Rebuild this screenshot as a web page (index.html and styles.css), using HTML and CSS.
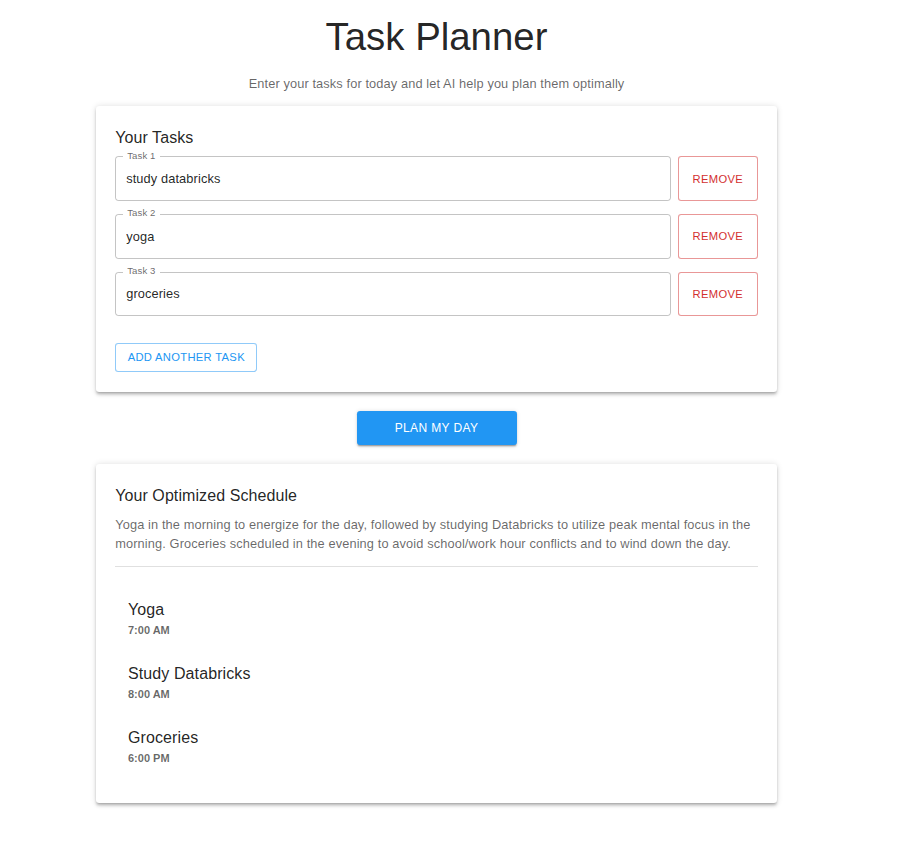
FILE: index.html
```html
<!DOCTYPE html>
<html lang="en">
<head>
<meta charset="utf-8">
<title>Task Planner</title>
<link rel="stylesheet" href="styles.css">
</head>
<body>
<main class="page">
  <h1 class="title">Task Planner</h1>
  <p class="subtitle">Enter your tasks for today and let AI help you plan them optimally</p>

  <section class="paper tasks-paper">
    <h2 class="paper-heading">Your Tasks</h2>
    <div class="task-list">
      <div class="task-row">
        <div class="field">
          <span class="field-label">Task 1</span>
          <input class="field-input" type="text" value="study databricks">
        </div>
        <button class="btn btn-remove" type="button">Remove</button>
      </div>
      <div class="task-row">
        <div class="field">
          <span class="field-label">Task 2</span>
          <input class="field-input" type="text" value="yoga">
        </div>
        <button class="btn btn-remove" type="button">Remove</button>
      </div>
      <div class="task-row">
        <div class="field">
          <span class="field-label">Task 3</span>
          <input class="field-input" type="text" value="groceries">
        </div>
        <button class="btn btn-remove" type="button">Remove</button>
      </div>
    </div>
    <button class="btn btn-add" type="button">Add Another Task</button>
  </section>

  <div class="plan-wrap">
    <button class="btn btn-plan" type="button">Plan My Day</button>
  </div>

  <section class="paper schedule-paper">
    <h2 class="paper-heading">Your Optimized Schedule</h2>
    <p class="summary">Yoga in the morning to energize for the day, followed by studying Databricks to utilize peak mental focus in the morning. Groceries scheduled in the evening to avoid school/work hour conflicts and to wind down the day.</p>
    <hr class="divider">
    <ul class="schedule">
      <li class="schedule-item">
        <span class="item-name">Yoga</span>
        <span class="item-time">7:00 AM</span>
      </li>
      <li class="schedule-item">
        <span class="item-name">Study Databricks</span>
        <span class="item-time">8:00 AM</span>
      </li>
      <li class="schedule-item">
        <span class="item-name">Groceries</span>
        <span class="item-time">6:00 PM</span>
      </li>
    </ul>
  </section>
</main>
</body>
</html>
```

FILE: styles.css
```css
* {
  box-sizing: border-box;
}

html, body {
  margin: 0;
  padding: 0;
  background: #ffffff;
}

body {
  font-family: "Liberation Sans", Arial, sans-serif;
  color: rgba(0, 0, 0, 0.87);
}

.page {
  width: 681px;
  margin-left: 96px;
  padding-top: 14.5px;
  padding-bottom: 40px;
}

.title {
  margin: 0 0 14.5px;
  font-size: 38.4px;
  line-height: 44.8px;
  font-weight: 400;
  text-align: center;
  color: rgba(0, 0, 0, 0.87);
}

.subtitle {
  margin: 0 0 13px;
  font-size: 12.8px;
  line-height: 19.2px;
  letter-spacing: 0.11px;
  text-align: center;
  color: rgba(0, 0, 0, 0.6);
}

.paper {
  background: #fff;
  border-radius: 3.2px;
  box-shadow: 0 2.4px 2.4px -1.6px rgba(0, 0, 0, 0.2),
              0 2.4px 3.2px 0 rgba(0, 0, 0, 0.14),
              0 0.8px 6.4px 0 rgba(0, 0, 0, 0.12);
  padding: 19.2px;
}

.tasks-paper {
  padding-bottom: 20px;
}

.schedule-paper {
  margin-top: 0.8px;
}

.paper-heading {
  margin: 0 0 5.6px;
  font-size: 16px;
  line-height: 25.6px;
  font-weight: 400;
  letter-spacing: 0.08px;
  color: rgba(0, 0, 0, 0.87);
}

.task-list {
  display: flex;
  flex-direction: column;
  gap: 12.8px;
}

.task-row {
  display: flex;
  gap: 6.4px;
  height: 44.8px;
}

.field {
  position: relative;
  flex: 1;
  display: flex;
  align-items: center;
  border: 1px solid rgba(0, 0, 0, 0.23);
  border-radius: 3.2px;
}

.field-label {
  position: absolute;
  left: 7px;
  top: -6.5px;
  padding: 0 4px;
  background: #fff;
  font-size: 9.6px;
  line-height: 9.6px;
  letter-spacing: 0.1px;
  color: rgba(0, 0, 0, 0.6);
}

.field-input {
  width: 100%;
  border: 0;
  outline: none;
  background: transparent;
  padding: 0 10px;
  margin: 0;
  font-family: inherit;
  font-size: 12.8px;
  letter-spacing: 0.11px;
  color: rgba(0, 0, 0, 0.87);
}

.btn {
  font-family: inherit;
  text-transform: uppercase;
  font-weight: 500;
  letter-spacing: 0.32px;
  border-radius: 3.2px;
  cursor: pointer;
  margin: 0;
}

.btn-remove {
  width: 80px;
  background: #fff;
  border: 1px solid rgba(211, 47, 47, 0.5);
  color: #d32f2f;
  font-size: 11.2px;
  padding: 0;
}

.btn-add {
  display: block;
  margin-top: 26.6px;
  height: 28.6px;
  padding: 0 11.5px;
  background: #fff;
  border: 1px solid rgba(33, 150, 243, 0.5);
  color: #2196f3;
  font-size: 11.2px;
}

.plan-wrap {
  display: flex;
  justify-content: center;
  padding: 19px 0 18.7px;
}

.btn-plan {
  width: 160px;
  height: 34.2px;
  border: 0;
  background: #2196f3;
  color: #fff;
  font-size: 12px;
  letter-spacing: 0.37px;
  box-shadow: 0 2.4px 0.8px -1.6px rgba(0, 0, 0, 0.2),
              0 1.6px 1.6px 0 rgba(0, 0, 0, 0.14),
              0 0.8px 4px 0 rgba(0, 0, 0, 0.12);
}

.summary {
  margin: 0 0 13.4px;
  font-size: 12.8px;
  line-height: 19.2px;
  letter-spacing: 0.115px;
  color: rgba(0, 0, 0, 0.6);
}

.divider {
  margin: 0;
  border: 0;
  border-top: 1px solid rgba(0, 0, 0, 0.12);
}

.schedule {
  list-style: none;
  margin: 0;
  padding: 18.6px 0 6px;
}

.schedule-item {
  display: flex;
  flex-direction: column;
  padding: 12px 12.8px;
}

.item-name {
  font-size: 16px;
  line-height: 24px;
  letter-spacing: 0.1px;
  color: rgba(0, 0, 0, 0.87);
}

.item-time {
  font-size: 11px;
  line-height: 16px;
  font-weight: 700;
  color: rgba(0, 0, 0, 0.6);
}
```
